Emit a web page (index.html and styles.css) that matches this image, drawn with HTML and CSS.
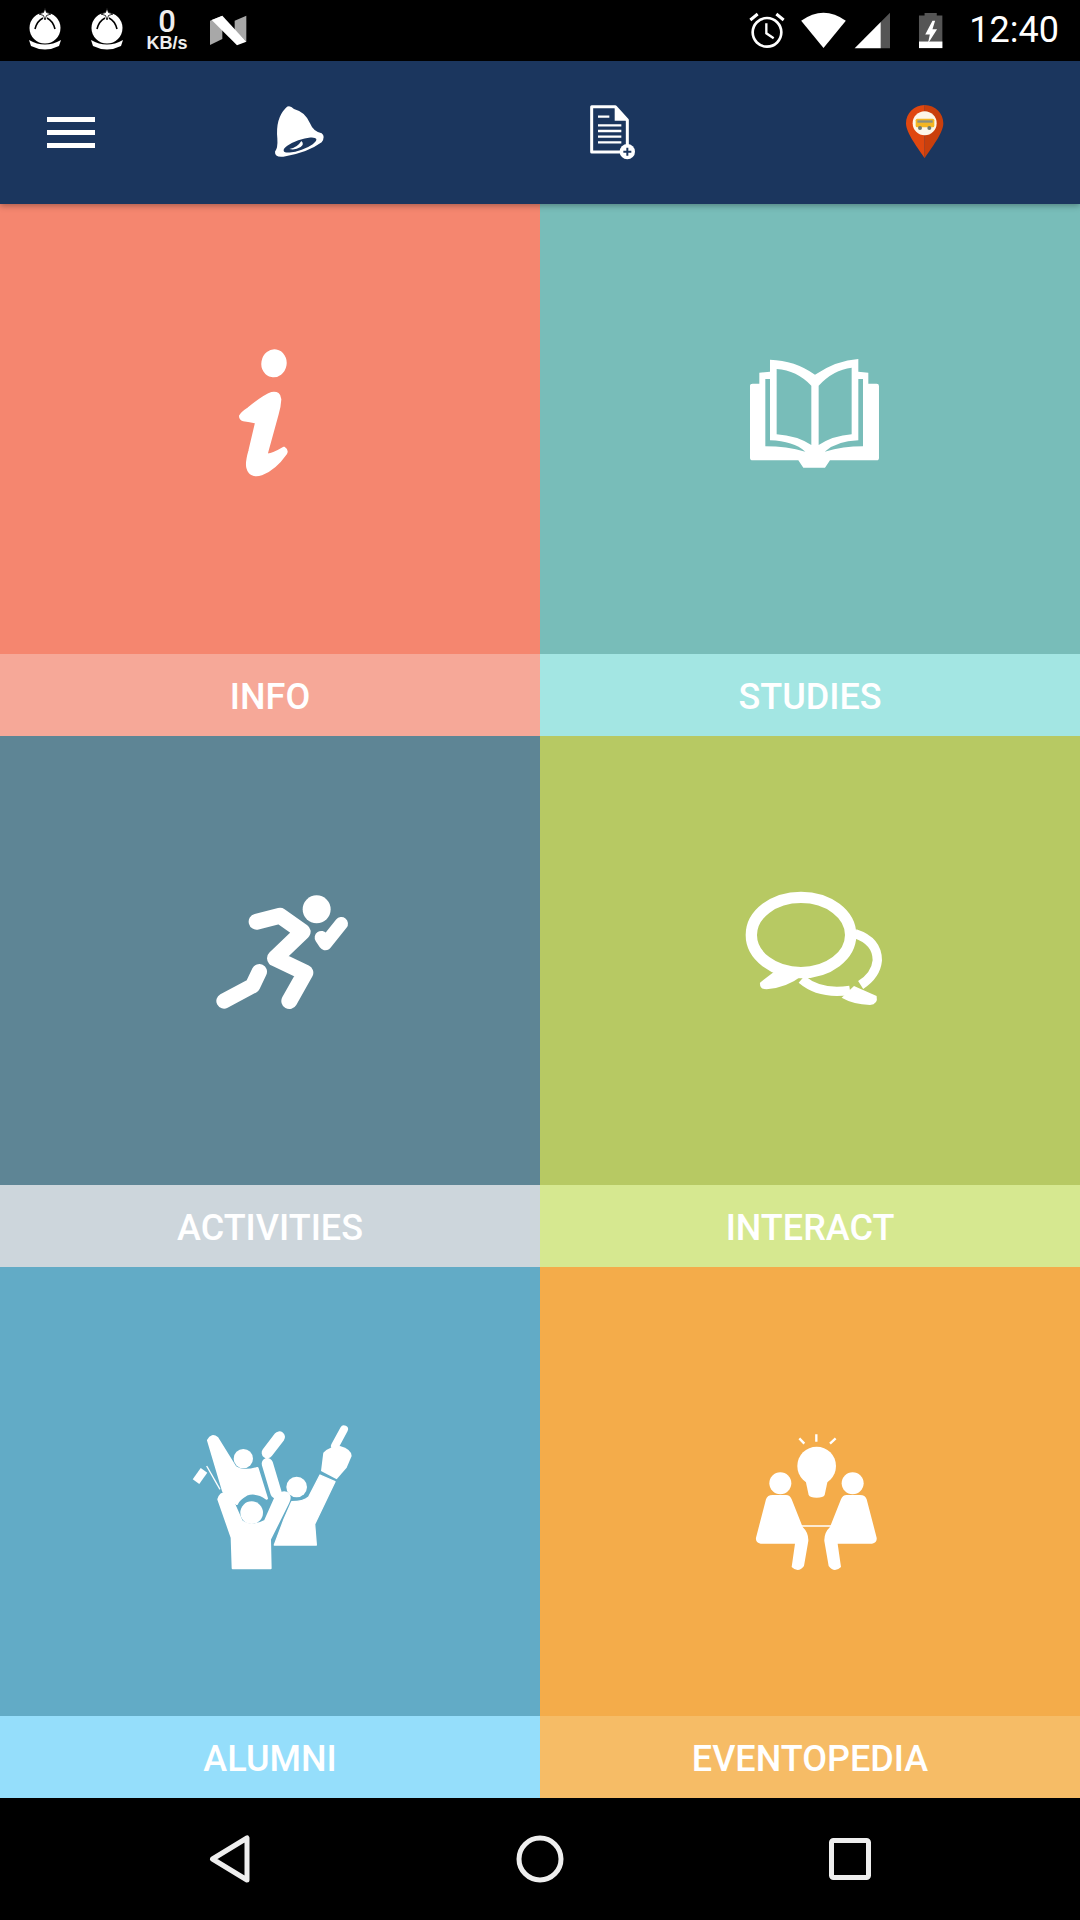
FILE: index.html
```html
<!DOCTYPE html>
<html lang="en">
<head>
    <meta charset="UTF-8">
    <title>Campus Home</title>
    <link rel="stylesheet" href="styles.css">
</head>
<body>
    <!-- Android status bar -->
    <div class="status-bar">
        <svg class="globe" viewBox="0 0 34 61">
            <circle cx="17" cy="28" r="15.500" fill="#fff"/>
            <path d="M7 29Q9 21 15 18M27 29Q25 21 19 18" fill="none" stroke="#000" stroke-width="1.600"/>
            <path d="M17 8l1.500 4.500 4.500 1.500-4.500 1.500-1.500 4.500-1.500-4.500-4.500-1.500 4.500-1.500z" fill="#fff" stroke="#000" stroke-width=".8"/>
            <path d="M1 40Q17 49 33 40L31 46Q17 53 3 46z" fill="#fff"/>
        </svg>
        <svg class="globe second" viewBox="0 0 34 61">
            <circle cx="17" cy="28" r="15.500" fill="#fff"/>
            <path d="M7 29Q9 21 15 18M27 29Q25 21 19 18" fill="none" stroke="#000" stroke-width="1.600"/>
            <path d="M17 8l1.500 4.500 4.500 1.500-4.500 1.500-1.500 4.500-1.500-4.500-4.500-1.500 4.500-1.500z" fill="#fff" stroke="#000" stroke-width=".8"/>
            <path d="M1 40Q17 49 33 40L31 46Q17 53 3 46z" fill="#fff"/>
        </svg>
        <div class="speed">
            <span class="speed-num">0</span>
            <span class="speed-unit">KB/s</span>
        </div>
        <svg class="n-logo" viewBox="625 0 120 183">
            <path d="M631 62L668 47V117L631 135z" fill="#a8a8a8"/>
            <path d="M705 62L740 47V125L705 90z" fill="#a8a8a8"/>
            <path d="M636 60L668 47L740 125L712 136z" fill="#fff"/>
        </svg>
        <div class="status-right">
            <svg class="alarm" viewBox="80 0 120 183">
                <circle cx="140" cy="97" r="43" fill="none" stroke="#fff" stroke-width="8"/>
                <path d="M138 70V100L160 115" fill="none" stroke="#fff" stroke-width="7"/>
                <path d="M90 60L112 42M190 60L168 42" fill="none" stroke="#fff" stroke-width="9"/>
            </svg>
            <svg class="wifi" viewBox="240 0 140 183">
                <path d="M243 62Q310 14 377 62L310 144z" fill="#fff"/>
            </svg>
            <svg class="signal" viewBox="400 0 115 183">
                <path d="M484 66L512 38V145H484z" fill="#555"/>
                <path d="M405 145L484 66V145z" fill="#fff"/>
            </svg>
            <svg class="battery" viewBox="595 0 82 183">
                <path d="M618 38H655V46H672V145H601V46H618z" fill="#555"/>
                <path d="M601 125H672V145H601z" fill="#fff"/>
                <path d="M642 62L620 104H634L628 132L656 88H642L650 62z" fill="#fff"/>
            </svg>
            <span class="clock">12:40</span>
        </div>
    </div>

    <!-- Toolbar -->
    <header class="toolbar">
        <div class="menu-btn">
            <span></span>
            <span></span>
            <span></span>
        </div>
        <svg class="bell" viewBox="0 0 240 225">
            <path d="M78 38Q88 28 102 42Q135 50 150 85Q160 110 185 115Q197 125 185 142Q140 175 70 185Q44 188 45 170Q54 160 52 130Q46 70 78 38z" fill="#fff"/>
            <ellipse cx="120" cy="150" rx="52" ry="15" transform="rotate(-20 120 150)" fill="#1b365e"/>
            <path d="M88 162Q112 158 124 138Q134 148 122 156Q106 166 88 162z" fill="#fff"/>
        </svg>
        <svg class="doc" viewBox="150 90 150 195">
            <path d="M155 110H226L262 150V246H155z" fill="none" stroke="#fff" stroke-width="9" stroke-linejoin="round"/>
            <path d="M224 108V152H264z" fill="#fff"/>
            <path d="M174 140H208M174 166H244M174 183H244M174 200H244M174 217H244" stroke="#fff" stroke-width="7" fill="none"/>
            <circle cx="262" cy="245" r="23" fill="#fff"/>
            <path d="M250 245H274M262 233V257" stroke="#1b365e" stroke-width="6" fill="none"/>
        </svg>
        <svg class="pin" viewBox="1095 90 120 195">
            <path d="M1154 105C1122 105 1098 130 1098 160C1098 190 1135 235 1154 265z" fill="#e0470f"/>
            <path d="M1154 105C1186 105 1210 130 1210 160C1210 190 1173 235 1154 265z" fill="#c93f0c"/>
            <circle cx="1154" cy="160" r="36" fill="#fdf6e8"/>
            <rect x="1127" y="146" width="56" height="26" rx="5" fill="#f4b622"/>
            <rect x="1132" y="151" width="46" height="7" fill="#8a8f80"/>
            <circle cx="1140" cy="174" r="6" fill="#6f7a70"/>
            <circle cx="1168" cy="174" r="6" fill="#6f7a70"/>
        </svg>
    </header>

    <!-- Main menu -->
    <main class="tile-grid">
        <a class="tile info">
            <div class="tile-icon">
                <svg viewBox="0 0 200 200"><g transform="translate(30 2) scale(.3333)" fill="#fff">
                    <ellipse cx="222" cy="97" rx="38" ry="42" transform="rotate(10 222 97)"/>
                    <path d="M120 255Q125 245 145 232Q190 195 215 186Q240 182 241 205Q240 225 233 250L200 370Q215 372 252 350Q264 358 258 368Q225 415 185 430Q150 440 142 410Q138 395 148 360L168 275Q150 270 130 268Q120 265 120 255z" stroke="#fff" stroke-width="6" stroke-linejoin="round"/>
                </g></svg>
            </div>
            <div class="tile-label">INFO</div>
        </a>
        <a class="tile studies">
            <div class="tile-icon">
                <svg viewBox="0 0 200 200"><g transform="translate(20 12) scale(.3333)">
                    <path d="M60 135Q60 128 68 128H88V95L120 92V56Q195 58 255 101Q320 58 385 54V92L415 95V128H440Q447 128 447 135V350Q447 358 440 358H300L285 380H220L205 358H68Q60 358 60 350z" fill="#fff"/>
                    <path d="M140 84Q200 88 244 134V312Q200 284 140 280z" fill="#78bdb9"/>
                    <path d="M365 80Q310 86 266 134V312Q310 284 365 280z" fill="#78bdb9"/>
                    <path d="M106 114H120V298Q190 300 226 332Q170 316 106 316z" fill="#78bdb9"/>
                    <path d="M399 114H385V298Q320 300 284 332Q340 316 399 316z" fill="#78bdb9"/>
                </g></svg>
            </div>
            <div class="tile-label">STUDIES</div>
        </a>
        <a class="tile activities">
            <div class="tile-icon">
                <svg viewBox="0 0 200 200"><g transform="translate(30 20) scale(.3333)" fill="none" stroke="#fff" stroke-width="48" stroke-linecap="round" stroke-linejoin="round">
                    <circle cx="350" cy="85" r="42" fill="#fff" stroke="none"/>
                    <path d="M170 122L240 104L308 152L225 232L316 275L268 360"/>
                    <path d="M364 170L376 188L424 128" stroke-width="40"/>
                    <path d="M72 360L158 314L178 272" stroke-width="46"/>
                </g></svg>
            </div>
            <div class="tile-label">ACTIVITIES</div>
        </a>
        <a class="tile interact">
            <div class="tile-icon">
                <svg viewBox="0 0 200 200"><g transform="translate(20 10) scale(.3333)" fill="#fff">
                    <ellipse cx="213" cy="192" rx="149" ry="113" fill="none" stroke="#fff" stroke-width="34"/>
                    <path d="M155 285L90 335Q88 355 110 355Q170 350 215 315z"/>
                    <path d="M375 188Q442 210 442 268Q438 312 392 342" fill="none" stroke="#fff" stroke-width="28"/>
                    <path d="M215 325Q270 372 360 358" fill="none" stroke="#fff" stroke-width="28"/>
                    <path d="M372 345L440 375Q445 400 420 402Q370 400 335 380z"/>
                </g></svg>
            </div>
            <div class="tile-label">INTERACT</div>
        </a>
        <a class="tile alumni">
            <div class="tile-icon">
                <svg viewBox="0 0 200 200"><g transform="translate(10 19) scale(.3333)" fill="#fff">
                    <path d="M85 88Q95 68 112 82L165 168Q190 185 232 172L260 262Q230 240 200 250Q175 265 170 278L130 240z" stroke="#fff" stroke-width="8" stroke-linejoin="round"/>
                    <circle cx="190" cy="143" r="29"/>
                    <path d="M298 78L262 125M262 158L288 245" fill="none" stroke="#fff" stroke-width="34" stroke-linecap="round"/>
                    <path d="M48 212L72 178" fill="none" stroke="#fff" stroke-width="24"/>
                    <path d="M80 165L120 235" fill="none" stroke="#fff" stroke-width="4"/>
                    <circle cx="350" cy="228" r="31"/>
                    <path d="M492 55L465 105" fill="none" stroke="#fff" stroke-width="24" stroke-linecap="round"/>
                    <path d="M430 125Q450 105 480 105Q515 115 515 135L500 170L470 205L423 180z"/>
                    <path d="M420 192L465 212L404 340L409 402H283L312 325L335 272Q370 272 386 258z" stroke="#fff" stroke-width="4" stroke-linejoin="round"/>
                    <circle cx="215" cy="305" r="34"/>
                    <path d="M115 265Q120 245 140 245Q155 250 165 285L185 330Q215 352 255 330L285 262Q300 240 320 245Q335 255 325 275L270 385L272 472H158L155 380z" stroke="#fff" stroke-width="6" stroke-linejoin="round"/>
                </g></svg>
            </div>
            <div class="tile-label">ALUMNI</div>
        </a>
        <a class="tile eventopedia">
            <div class="tile-icon">
                <svg viewBox="0 0 200 200"><g transform="translate(30 29) scale(.3333)" fill="#fff">
                    <path d="M178 52L193 68M229 40V62M270 68L287 52" fill="none" stroke="#fff" stroke-width="7"/>
                    <circle cx="230" cy="135" r="58"/>
                    <path d="M195 170H265L254 222Q250 230 230 230Q210 230 206 222z"/>
                    <circle cx="121" cy="187" r="33"/>
                    <circle cx="338" cy="187" r="33"/>
                    <path d="M78 235Q82 222 98 222H138Q150 222 155 235L188 318Q206 335 205 360L192 435Q175 458 155 438L165 368H62Q46 365 48 350z"/>
                    <path d="M380 235Q376 222 360 222H320Q308 222 303 235L270 318Q252 335 253 360L266 435Q283 458 303 438L293 368H396Q412 365 410 350z"/>
                    <path d="M180 315H280" fill="none" stroke="#fff" stroke-width="4"/>
                </g></svg>
            </div>
            <div class="tile-label">EVENTOPEDIA</div>
        </a>
    </main>

    <!-- Android nav bar -->
    <nav class="nav-bar">
        <svg viewBox="0 0 48 48"><path d="M6.500 24L41 3V45z" fill="none" stroke="#eee" stroke-width="5" stroke-linejoin="round"/></svg>
        <svg viewBox="0 0 48 48"><circle cx="24" cy="24" r="21" fill="none" stroke="#eee" stroke-width="5"/></svg>
        <svg viewBox="0 0 48 48"><rect x="5.500" y="5.500" width="37" height="37" rx="2" fill="none" stroke="#eee" stroke-width="5"/></svg>
    </nav>
</body>
</html>
```

FILE: styles.css
```css
* {
    box-sizing: border-box;
}

body {
    margin: 0;
    width: 1080px;
    height: 1920px;
    display: flex;
    flex-direction: column;
    font-family: Roboto, "Liberation Sans", sans-serif;
    background-color: #000;
    overflow: hidden;
}

/* status bar */
.status-bar {
    height: 61px;
    flex-shrink: 0;
    display: flex;
    align-items: center;
    padding: 0 21px 0 28px;
    background-color: #000;
    color: #fff;
}

.status-bar svg {
    height: 61px;
    display: block;
    flex-shrink: 0;
}

.globe {
    width: 34px;
}

.globe.second {
    margin-left: 28px;
}

.speed {
    width: 42px;
    margin-left: 22px;
    display: flex;
    flex-direction: column;
    align-items: center;
    color: #eee;
}

.speed-num {
    font-size: 31px;
    font-weight: 500;
    line-height: 24px;
}

.speed-unit {
    margin-top: 2px;
    font-family: "Liberation Sans", sans-serif;
    font-size: 18px;
    font-weight: bold;
    line-height: 15px;
}

.n-logo {
    width: 40px;
    margin-left: 20px;
}

.status-right {
    margin-left: auto;
    display: flex;
    align-items: center;
}

.alarm {
    width: 40px;
}

.wifi {
    width: 47px;
    margin-left: 13px;
}

.signal {
    width: 38px;
    margin-left: 6px;
}

.battery {
    width: 27px;
    margin-left: 26px;
}

.clock {
    margin-left: 25px;
    font-size: 36px;
    line-height: 61px;
}

/* toolbar */
.toolbar {
    height: 143px;
    flex-shrink: 0;
    display: flex;
    align-items: center;
    padding-left: 47px;
    background-color: #1b365e;
    box-shadow: 0 2px 6px rgba(0, 0, 0, 0.3);
    position: relative;
    z-index: 1;
}

.menu-btn {
    width: 48px;
    display: flex;
    flex-direction: column;
    gap: 8px;
}

.menu-btn span {
    height: 5px;
    background-color: #fff;
}

.bell {
    width: 80px;
    height: 75px;
    margin-left: 165px;
}

.doc {
    width: 50px;
    height: 65px;
    margin-left: 250px;
}

.pin {
    width: 40px;
    height: 65px;
    margin-left: 265px;
}

/* tiles */
.tile-grid {
    flex: 1;
    display: grid;
    grid-template-columns: 1fr 1fr;
    grid-template-rows: 532px 531px 531px;
}

.tile {
    display: flex;
    flex-direction: column;
}

.tile-icon {
    flex: 1;
    display: flex;
    align-items: center;
    justify-content: center;
}

.tile-icon svg {
    width: 200px;
    height: 200px;
    display: block;
}

.tile-label {
    height: 82px;
    padding-top: 4px;
    display: flex;
    align-items: center;
    justify-content: center;
    color: #fff;
    font-size: 36px;
    font-weight: 500;
}

.info .tile-icon { background-color: #f5866f; }
.info .tile-label { background-color: #f6a898; }
.studies .tile-icon { background-color: #78bdb9; }
.studies .tile-label { background-color: #a3e6e3; }
.activities .tile-icon { background-color: #5e8595; }
.activities .tile-label { background-color: #cdd6dc; }
.interact .tile-icon { background-color: #b7c963; }
.interact .tile-label { background-color: #d6e890; }
.alumni .tile-icon { background-color: #62abc6; }
.alumni .tile-label { background-color: #95defb; }
.eventopedia .tile-icon { background-color: #f4ac4a; }
.eventopedia .tile-label { background-color: #f6bc66; }

/* nav bar */
.nav-bar {
    height: 122px;
    flex-shrink: 0;
    display: flex;
    align-items: center;
    justify-content: space-between;
    padding: 0 206px;
    background-color: #000;
}

.nav-bar svg {
    width: 48px;
    height: 48px;
    display: block;
}
```
